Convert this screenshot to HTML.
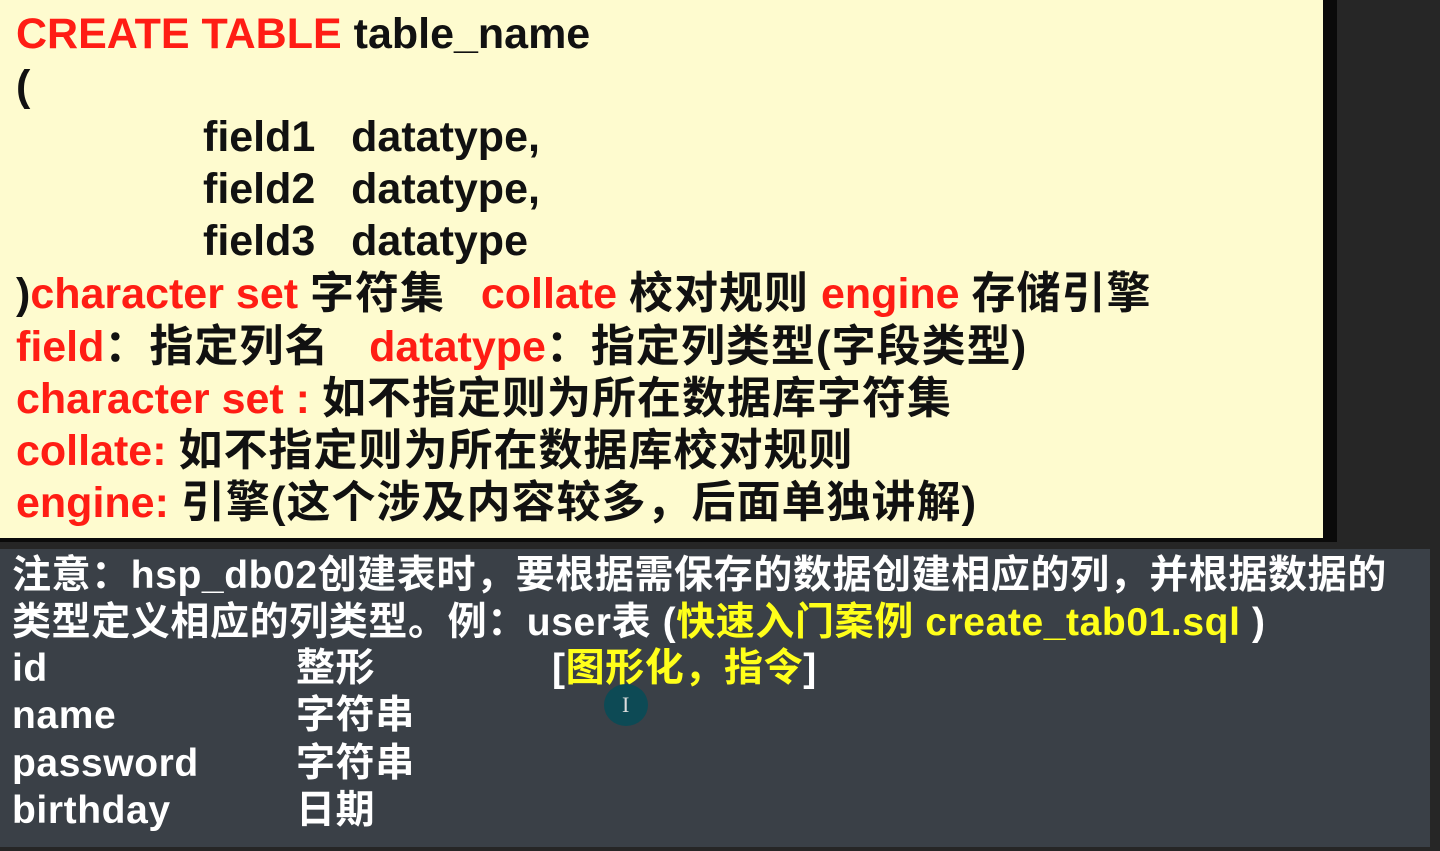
<!DOCTYPE html>
<html><head><meta charset="utf-8"><style>
body{margin:0;width:1440px;height:851px;overflow:hidden;background:#262626;position:relative;font-family:"Liberation Sans","Noto Sans CJK SC",sans-serif;font-weight:bold}
#y{position:absolute;left:0;top:0;width:1323px;height:538px;background:#fefbcf;border-right:14px solid #0a0a0a;border-bottom:4px solid #0a0a0a}
#b{position:absolute;left:0;top:549px;width:1430px;height:298px;background:#3a4047}
.l{position:absolute;white-space:nowrap;line-height:1;}
.y .l{font-size:43px;color:#111}
.c{font-size:44px;letter-spacing:1px}
.r{color:#ff1d14}
.b .l{font-size:39px;color:#fff;letter-spacing:0.6px}
.g{color:#ffff1a}
</style></head><body>
<div id="y"></div><div id="b"></div>
<div class="y">
<div class="l" style="left:16px;top:13px"><span class="r">CREATE TABLE</span> table_name</div>
<div class="l" style="left:16px;top:65px">(</div>
<div class="l" style="left:203px;top:116px">field1&nbsp;&nbsp; datatype,</div>
<div class="l" style="left:203px;top:168px">field2&nbsp;&nbsp; datatype,</div>
<div class="l" style="left:203px;top:220px">field3&nbsp;&nbsp; datatype</div>
<div class="l" style="left:16px;top:272px">)<span class="r">character set</span> <span class="c">字符集</span> &nbsp;&nbsp;<span class="r">collate</span> <span class="c">校对规则</span> <span class="r">engine</span> <span class="c">存储引擎</span></div>
<div class="l" style="left:16px;top:325px"><span class="r">field</span><span class="c">：指定列名 &nbsp;&nbsp;</span><span class="r">datatype</span><span class="c">：指定列类型(字段类型)</span></div>
<div class="l" style="left:16px;top:377px"><span class="r">character set :</span> <span class="c">如不指定则为所在数据库字符集</span></div>
<div class="l" style="left:16px;top:429px"><span class="r">collate:</span> <span class="c">如不指定则为所在数据库校对规则</span></div>
<div class="l" style="left:16px;top:481px"><span class="r">engine:</span> <span class="c">引擎(这个涉及内容较多，后面单独讲解)</span></div>
</div>
<div class="b">
<div class="l" style="left:12px;top:556px">注意：hsp_db02创建表时，要根据需保存的数据创建相应的列，并根据数据的</div>
<div class="l" style="left:12px;top:603px">类型定义相应的列类型。例：user表 (<span class="g">快速入门案例 create_tab01.sql</span> )</div>
<div class="l" style="left:12px;top:649px">id</div><div class="l" style="left:296px;top:649px">整形</div>
<div class="l" style="left:552px;top:649px">[<span class="g">图形化，指令</span>]</div>
<div class="l" style="left:12px;top:696px">name</div><div class="l" style="left:296px;top:696px">字符串</div>
<div class="l" style="left:12px;top:744px">password</div><div class="l" style="left:296px;top:744px">字符串</div>
<div class="l" style="left:12px;top:791px">birthday</div><div class="l" style="left:296px;top:791px">日期</div>
</div>
<div style="position:absolute;left:604px;top:684px;width:44px;height:42px;border-radius:50%;background:#0d4a55"></div>
<div style="position:absolute;left:622px;top:692px;color:#ddd;font:22px 'Liberation Serif',serif">I</div>
</body></html>
